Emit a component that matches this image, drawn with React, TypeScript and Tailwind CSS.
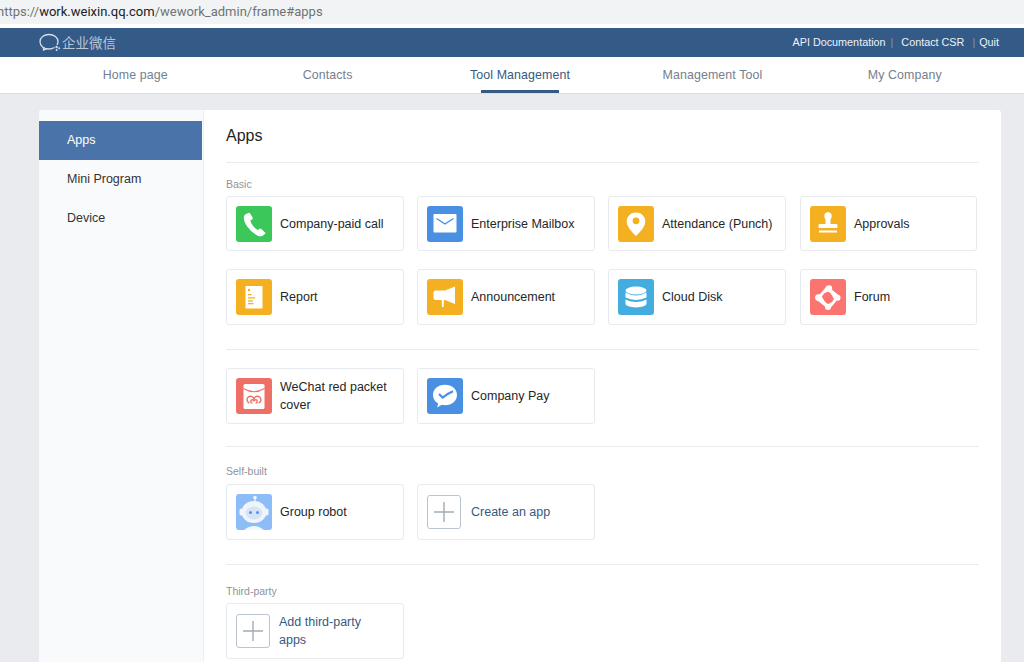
import React from "react";

const F = "[font-family:'Liberation_Sans',Arial,sans-serif]";

function Tile({ bg, children }: { bg: string; children: React.ReactNode }) {
  return (
    <div className="w-[36px] h-[36px] rounded-[3px] shrink-0 overflow-hidden" style={{ background: bg }}>
      <svg viewBox="0 0 36 36" width="36" height="36">{children}</svg>
    </div>
  );
}

const Phone = () => (
  <Tile bg="#3cc75a">
    <path d="M9.2 8.6 L12.2 6.9 Q13.4 6.4 14.1 7.5 L16.6 11.6 Q17.1 12.7 16.1 13.4 L14.3 14.6 Q14.8 17 17 19.8 Q19.3 22.6 21.8 23.9 L23.6 22.7 Q24.6 22.2 25.5 23 L29 26.4 Q29.8 27.3 28.9 28.1 L26.6 29.7 Q24.8 30.9 22.3 29.9 Q15.5 27 11.2 20.6 Q7.6 15.2 7.8 11 Q8 9.4 9.2 8.6Z" fill="#fff" />
  </Tile>
);
const Mail = () => (
  <Tile bg="#4a90e2">
    <rect x="6.5" y="8" width="23" height="18.5" rx="1" fill="#fff" />
    <path d="M9.5 12.5 L18 18 L26.5 12.5" fill="none" stroke="#4a90e2" strokeWidth="1.4" />
  </Tile>
);
const Pin = () => (
  <Tile bg="#f5b021">
    <path d="M18 6.5 C12.3 6.5 8.7 10.6 8.7 15.4 C8.7 21 15 26.6 18 30 C21 26.6 27.3 21 27.3 15.4 C27.3 10.6 23.7 6.5 18 6.5Z" fill="#fff" />
    <circle cx="18" cy="14.8" r="3.4" fill="#f5b021" />
  </Tile>
);
const Stamp = () => (
  <Tile bg="#f5b021">
    <path d="M14.3 10 A3.7 3.7 0 0 1 21.7 10 Q21.7 12.2 20.5 13.6 L20.5 18 L26.5 18 Q27.4 18 27.4 19 L27.4 22 L8.6 22 L8.6 19 Q8.6 18 9.5 18 L15.5 18 L15.5 13.6 Q14.3 12.2 14.3 10Z" fill="#fff" />
    <rect x="9" y="24.5" width="18" height="2" fill="#fff" />
  </Tile>
);
const ReportIcon = () => (
  <Tile bg="#f5b021">
    <rect x="9.5" y="7" width="17" height="22.5" rx="0.8" fill="#fff" />
    <circle cx="13" cy="11" r="1.2" fill="#f5b021" />
    <rect x="12" y="15" width="3.5" height="1.3" fill="#f5b021" />
    <rect x="12" y="18.2" width="7" height="1.3" fill="#f5b021" />
    <rect x="12" y="21.4" width="5" height="1.3" fill="#f5b021" />
    <rect x="12" y="24" width="5.5" height="1.3" fill="#f5b021" />
  </Tile>
);
const Horn = () => (
  <Tile bg="#f5b021">
    <path d="M6.5 13.5 Q6.5 11.5 8.5 11.5 L18 11.5 L28 7.5 L28 25 L18 21 L17 21 L16.6 28 L15 28 L14.6 21 L8.5 21 Q6.5 21 6.5 19Z" fill="#fff" />
  </Tile>
);
const Disk = () => (
  <Tile bg="#43ade0">
    <ellipse cx="18" cy="11.5" rx="10.5" ry="4" fill="#fff" />
    <path d="M7.5 13.6 Q18 19.6 28.5 13.6 L28.5 18.6 Q18 23.4 7.5 18.6Z" fill="#fff" />
    <path d="M7.5 20.6 Q18 25.6 28.5 20.6 L28.5 25 Q28 28 18 28.4 Q8 28 7.5 25Z" fill="#fff" />
  </Tile>
);
const ForumIcon = () => (
  <Tile bg="#fc7470">
    <path d="M15.6 7.5 L21 10 L28.4 16 L29.5 20.5 L24 20 L20.8 14.4 L17.6 11.8Z" fill="#fff" />
    <path d="M29 17 L26 22.5 L20 29.5 L16 30.5 L16.5 26 L22 23 L24.4 19.6Z" fill="#fff" />
    <path d="M20 30 L15 27.5 L7.5 21.5 L6.4 17.5 L12 18 L15.2 23 L18.4 25.6Z" fill="#fff" />
    <path d="M7 20.5 L10 15 L16 8 L20 7 L19.5 11.5 L14 14.5 L11.6 18Z" fill="#fff" />
    <circle cx="19" cy="9.5" r="3.2" fill="#fff" />
    <circle cx="27.5" cy="18.8" r="3" fill="#fff" />
    <circle cx="18" cy="28" r="3" fill="#fff" />
    <circle cx="8.5" cy="18.6" r="3.4" fill="#fff" />
  </Tile>
);
const RedPacket = () => (
  <Tile bg="#ee6f66">
    <rect x="7.5" y="6" width="21" height="25" rx="1.6" fill="#fff" />
    <path d="M7.5 10.5 Q18 17 28.5 10.5" fill="none" stroke="#ee6f66" strokeWidth="1.1" />
    <path d="M13.4 25 A3.5 3.5 0 1 1 18 21 A3.5 3.5 0 1 1 22.6 25 M16.4 25 A1.6 1.6 0 1 1 18 23.4 A1.6 1.6 0 1 1 19.6 25" fill="none" stroke="#ee6f66" strokeWidth="1.4" />
  </Tile>
);
const PayIcon = () => (
  <Tile bg="#4a90e2">
    <path d="M18 6.8 C10.8 6.8 6 11.4 6 17 C6 20.6 8 23.6 11.2 25.5 L10 29.4 L14.8 26.8 C15.9 27.1 16.9 27.2 18 27.2 C25.2 27.2 30 22.6 30 17 C30 11.4 25.2 6.8 18 6.8Z" fill="#fff" />
    <path d="M12 16 L15.6 19.6 Q20 15.8 26 13.2" fill="none" stroke="#4a90e2" strokeWidth="2.2" />
  </Tile>
);
const Robot = () => (
  <Tile bg="#8dbdf6">
    <circle cx="19" cy="3.6" r="1.8" fill="#f2f6fc" />
    <rect x="18.4" y="4" width="1.2" height="4" fill="#f2f6fc" />
    <ellipse cx="18" cy="18" rx="12.6" ry="11" fill="#f0f4fb" />
    <rect x="3.5" y="14.5" width="3" height="7" rx="1.5" fill="#f2f6fc" />
    <rect x="29.5" y="14.5" width="3" height="7" rx="1.5" fill="#f2f6fc" />
    <ellipse cx="18" cy="19" rx="8.5" ry="6.5" fill="#d6e4f8" />
    <circle cx="14.5" cy="18.5" r="1.5" fill="#5b93e0" />
    <circle cx="21.5" cy="18.5" r="1.5" fill="#5b93e0" />
    <path d="M8 36 Q18 28 28 36Z" fill="#f4f7fc" />
  </Tile>
);
const Plus = () => (
  <div className="w-[34px] h-[34px] rounded-[3px] border border-[#bcc4cf] shrink-0 flex items-center justify-center">
    <svg viewBox="0 0 22 22" width="22" height="22">
      <path d="M11 1V21M1 11H21" stroke="#a3abb6" strokeWidth="1.4" />
    </svg>
  </div>
);

function Card({ icon, label, link, h = "h-[55px]", gap = "gap-[8px]" }: { icon: React.ReactNode; label: React.ReactNode; link?: boolean; h?: string; gap?: string }) {
  return (
    <div className={`${h} bg-white border border-[#e7eaee] rounded-[3px] pl-[9px] pr-[6px] flex items-center ${gap}`}>
      {icon}
      <div className={`text-[12.5px] leading-[18px] ${link ? "text-[#375a82]" : "text-[#262626]"}`}>{label}</div>
    </div>
  );
}

const Grid = ({ children }: { children: React.ReactNode }) => (
  <div className="grid grid-cols-[178px_178px_178px_178px] gap-x-[13px] gap-y-[18px] [&>*:nth-child(4n)]:ml-[1px]">{children}</div>
);
const Rule = ({ cls }: { cls: string }) => <div className={`h-px bg-[#e9ebee] ${cls}`} />;
const Caption = ({ children, cls }: { children: React.ReactNode; cls: string }) => (
  <div className={`text-[10.5px] leading-[13px] text-[#8f939a] ${cls}`}>{children}</div>
);

export default function App() {
  const tabs = ["Home page", "Contacts", "Tool Management", "Management Tool", "My Company"];
  return (
    <div className={`w-[1024px] h-[662px] overflow-hidden bg-[#e9ebee] ${F}`}>
      <div className="h-[24px] bg-[#f1f3f4] overflow-hidden">
        <div className="ml-[-3px] text-[13px] leading-[23px] text-[#6f7377] [font-family:'Roboto','Noto_Sans',sans-serif]">
          https://<span className="text-[#202124]">work.weixin.qq.com</span>/wework_admin/frame#apps
        </div>
      </div>
      <div className="h-[4px] bg-white" />
      <header className="h-[29px] bg-[#345a87] flex items-center justify-between pl-[39px] pr-[25px]">
        <div className="flex items-center gap-[1px] -translate-y-px">
          <svg viewBox="0 0 22 20" width="22" height="20" fill="none" stroke="#d5dde8" strokeWidth="1.3">
            <path d="M15.5 15.5 Q13 17 10 17 C4.8 17 1 13.8 1 9.8 C1 5.6 4.8 2.5 10 2.5 C15.2 2.5 19 5.6 19 9.8 Q19 11.4 18 12.8" />
            <path d="M4.5 15 L4.5 18 L8 16.6" />
            <circle cx="17.6" cy="15" r="1.2" fill="#d5dde8" stroke="none" />
            <circle cx="20.2" cy="16.2" r="1" fill="#d5dde8" stroke="none" />
            <circle cx="17.6" cy="18" r="1" fill="#d5dde8" stroke="none" />
          </svg>
          <span className="text-[13.5px] text-[#b9c6d7] [font-family:'Noto_Sans_CJK_SC',sans-serif] leading-[20px]">企业微信</span>
        </div>
        <div className="flex items-center text-[10.8px] text-[#eef2f7]">
          <span>API Documentation</span>
          <span className="ml-[5px] mr-[8px] text-[#7f97b6]">|</span>
          <span>Contact CSR</span>
          <span className="ml-[8px] mr-[4px] text-[#7f97b6]">|</span>
          <span>Quit</span>
        </div>
      </header>
      <nav className="h-[37px] bg-white border-b border-[#dcdfe3] pl-[39px] pr-[23px] grid grid-cols-5">
        {tabs.map((t, i) => (
          <div key={t} className="flex flex-col items-center">
            <div className={`h-[33px] leading-[36px] text-[12.4px] tracking-[0.1px] ${i === 2 ? "text-[#375a82]" : "text-[#75808f]"}`}>{t}</div>
            {i === 2 && <div className="w-[78px] h-[3px] bg-[#375a82]" />}
          </div>
        ))}
      </nav>
      <div className="mt-[16px] ml-[39px] w-[962px] h-[560px] bg-white rounded-t-[3px] flex overflow-hidden">
        <aside className="w-[165px] shrink-0 bg-[#f9fafc] border-r border-[#eef0f3] pt-[11px] text-[12.5px] text-[#333]">
          <div className="h-[39px] mr-[1px] bg-[#4a74a9] text-white flex items-center pl-[28px]">Apps</div>
          <div className="h-[39px] flex items-center pl-[28px]">Mini Program</div>
          <div className="h-[39px] flex items-center pl-[28px]">Device</div>
        </aside>
        <main className="flex-1 pl-[22px] pr-[22px]">
          <h1 className="h-[53px] pt-[16px] leading-[20px] text-[16px] text-[#1f1f1f] border-b border-[#e9ebee]">Apps</h1>
          <Caption cls="mt-[15px] mb-[5px]">Basic</Caption>
          <Grid>
            <Card icon={<Phone />} label="Company-paid call" />
            <Card icon={<Mail />} label="Enterprise Mailbox" />
            <Card icon={<Pin />} label="Attendance (Punch)" />
            <Card icon={<Stamp />} label="Approvals" />
            <Card h="h-[56px]" icon={<ReportIcon />} label="Report" />
            <Card h="h-[56px]" icon={<Horn />} label="Announcement" />
            <Card h="h-[56px]" icon={<Disk />} label="Cloud Disk" />
            <Card h="h-[56px]" icon={<ForumIcon />} label="Forum" />
          </Grid>
          <Rule cls="mt-[24px] mb-[18px]" />
          <Grid>
            <Card h="h-[56px]" icon={<RedPacket />} label={<>WeChat red packet<br />cover</>} />
            <Card h="h-[56px]" icon={<PayIcon />} label="Company Pay" />
          </Grid>
          <Rule cls="mt-[22px]" />
          <Caption cls="mt-[18px] mb-[6px]">Self-built</Caption>
          <Grid>
            <Card h="h-[56px]" icon={<Robot />} label="Group robot" />
            <Card h="h-[56px]" gap="gap-[10px]" icon={<Plus />} label="Create an app" link />
          </Grid>
          <Rule cls="mt-[24px]" />
          <Caption cls="mt-[20px] mb-[5px]">Third-party</Caption>
          <Grid>
            <Card h="h-[56px]" gap="gap-[9px]" icon={<Plus />} label={<>Add third-party<br />apps</>} link />
          </Grid>
        </main>
      </div>
    </div>
  );
}
